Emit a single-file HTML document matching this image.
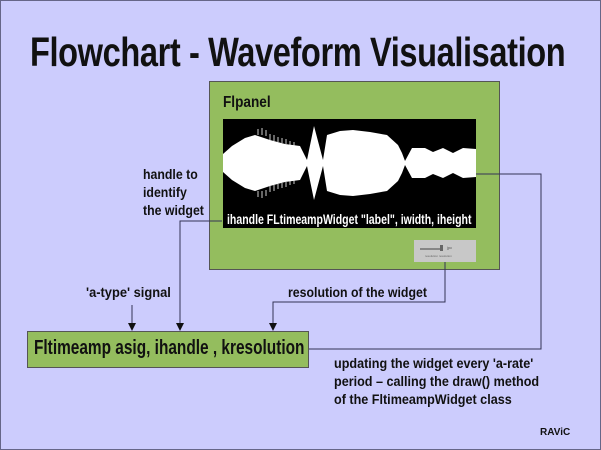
<!DOCTYPE html>
<html><head><style>
body{margin:0;width:601px;height:450px;overflow:hidden;background:#ccccfd;font-family:"Liberation Sans",sans-serif;}
.t{position:absolute;font-weight:bold;color:#111;white-space:nowrap;transform-origin:left top;}
</style></head><body>
<div style="position:absolute;left:0;top:0;width:599px;height:448px;border:1px solid #666688;"></div>
<div class="t" style="left:30px;top:29px;font-size:41px;letter-spacing:-0.5px;transform:scaleX(0.795);">Flowchart - Waveform Visualisation</div>
<div style="position:absolute;left:209px;top:81px;width:289px;height:187px;background:#94bd5e;border:1px solid #555;"></div>
<div class="t" style="left:223px;top:94px;font-size:16px;transform:scaleX(0.85);">Flpanel</div>
<svg style="position:absolute;left:0;top:0" width="601" height="450">
<rect x="223" y="119" width="253" height="109" fill="#000"/>
<polygon fill="#fff" points="223,154 232,146 245,138 255,135 270,140 285,144 300,146 307,160 314,126 323,160 327,135 340,131 353,130 370,132 387,135 398,145 402,153 405,161 412,148 425,148 433,152 443,148 453,153 463,148 476,149 476,177 463,178 453,173 443,178 433,174 425,178 412,178 405,165 402,173 398,181 387,191 370,194 353,196 340,195 327,191 323,166 314,200 307,166 300,180 285,182 270,186 255,191 245,188 232,180 223,172"/>
<g stroke="#fff" stroke-width="0.8">
<path d="M258,135v-6M262,135v-7M266,136v-6M270,140v-6M274,141v-6M278,142v-5M282,143v-5M286,144v-5M290,145v-4M294,146v-4M258,191v6M262,191v7M266,190v6M270,186v6M274,185v6M278,184v5M282,183v5M286,182v5M290,181v4M294,180v4"/>
</g>
<rect x="414" y="240" width="62" height="22" fill="#c8c8c8"/>
<line x1="420" y1="249" x2="440" y2="249" stroke="#444"/>
<rect x="440" y="245" width="3" height="6" fill="#666"/>
<text x="447" y="249" font-size="4" fill="#555">jpc</text>
<text x="425" y="257" font-size="3" fill="#666">resolution resolution</text>
<g stroke="#333355" stroke-width="1" fill="none">
<path d="M476,174H541V349H308"/>
<path d="M222,221H180V325"/>
<path d="M132,305V325"/>
<path d="M445,262V302H273V325"/>
</g>
<g fill="#111">
<path d="M176,323h8l-4,8z"/>
<path d="M128,323h8l-4,8z"/>
<path d="M269,323h8l-4,8z"/>
</g>
</svg>
<div class="t" style="left:227px;top:212px;font-size:13.5px;color:#fff;transform:scaleX(0.78);">ihandle FLtimeampWidget "label", iwidth, iheight</div>
<div class="t" style="left:143px;top:165px;font-size:14px;line-height:18px;transform:scaleX(0.88);">handle to<br>identify<br>the widget</div>
<div class="t" style="left:86px;top:284px;font-size:14px;transform:scaleX(0.92);">'a-type' signal</div>
<div class="t" style="left:288px;top:284px;font-size:14px;transform:scaleX(0.88);">resolution of the widget</div>
<div style="position:absolute;left:27px;top:331px;width:280px;height:35px;background:#94bd5e;border:1px solid #555;"></div>
<div class="t" style="left:34px;top:337px;font-size:20px;transform:scaleX(0.77);">Fltimeamp asig, ihandle , kresolution</div>
<div class="t" style="left:334px;top:354px;font-size:14px;line-height:18px;transform:scaleX(0.9);">updating the widget every 'a-rate'<br>period – calling the draw() method<br>of the FltimeampWidget class</div>
<div class="t" style="left:540px;top:427px;font-size:10px;">RAViC</div>
</body></html>
